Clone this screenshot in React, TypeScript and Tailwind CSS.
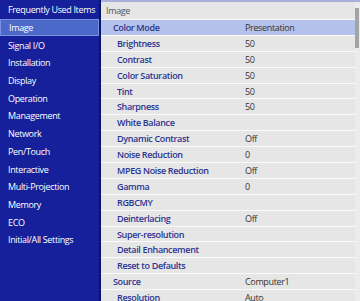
const menu = [
  'Frequently Used Items',
  'Image',
  'Signal I/O',
  'Installation',
  'Display',
  'Operation',
  'Management',
  'Network',
  'Pen/Touch',
  'Interactive',
  'Multi-Projection',
  'Memory',
  'ECO',
  'Initial/All Settings',
]

type Row = { label: string; value?: string; level: 1 | 2; active?: boolean }

const rows: Row[] = [
  { label: 'Color Mode', value: 'Presentation', level: 1, active: true },
  { label: 'Brightness', value: '50', level: 2 },
  { label: 'Contrast', value: '50', level: 2 },
  { label: 'Color Saturation', value: '50', level: 2 },
  { label: 'Tint', value: '50', level: 2 },
  { label: 'Sharpness', value: '50', level: 2 },
  { label: 'White Balance', level: 2 },
  { label: 'Dynamic Contrast', value: 'Off', level: 2 },
  { label: 'Noise Reduction', value: '0', level: 2 },
  { label: 'MPEG Noise Reduction', value: 'Off', level: 2 },
  { label: 'Gamma', value: '0', level: 2 },
  { label: 'RGBCMY', level: 2 },
  { label: 'Deinterlacing', value: 'Off', level: 2 },
  { label: 'Super-resolution', level: 2 },
  { label: 'Detail Enhancement', level: 2 },
  { label: 'Reset to Defaults', level: 2 },
  { label: 'Source', value: 'Computer1', level: 1 },
  { label: 'Resolution', value: 'Auto', level: 2 },
]

export default function App() {
  return (
    <div className="flex h-[301px] w-[360px] overflow-hidden bg-[#0c1466] text-[9px] leading-none tracking-[-0.35px]" style={{ fontFamily: '"Open Sans", sans-serif' }}>
      {/* left menu */}
      <div className="flex w-[99px] shrink-0 flex-col bg-[#16209a] pt-[1px]">
        {menu.map((m, i) => (
          <div
            key={m}
            className={`flex h-[17.7px] shrink-0 items-center whitespace-nowrap pl-[8px] font-medium text-white ${i === 1 ? 'border border-[#7a90e0] bg-[#4c68c8] pl-[7px]' : ''}`}
          >
            {m}
          </div>
        ))}
      </div>

      {/* right panel */}
      <div className="ml-[2px] flex flex-1 flex-col overflow-hidden border-t-2 border-[#a9b0dc] bg-[#e6e6e6]">
        <div className="flex h-[18px] shrink-0 items-center border-b border-[#fafafa] pl-[5px] text-[#555]">Image</div>
        {rows.map(r => (
          <div
            key={r.label}
            className={`flex h-[15.9px] shrink-0 items-center whitespace-nowrap border-b border-[#fafafa] ${r.active ? 'bg-[#b4c1ea]' : ''}`}
          >
            <span className={`w-[144px] font-semibold text-[#2b3591] ${r.level === 1 ? 'pl-[12px]' : 'pl-[16px]'}`}>{r.label}</span>
            <span className="text-[#333]">{r.value}</span>
          </div>
        ))}
      </div>

      {/* scrollbar */}
      <div className="flex w-[5px] shrink-0 flex-col border-t-2 border-[#a9b0dc] bg-[#ececec]">
        <div className="mt-[6px] h-[40px] w-[4px] bg-[#a4a4a4]" />
      </div>
    </div>
  )
}
